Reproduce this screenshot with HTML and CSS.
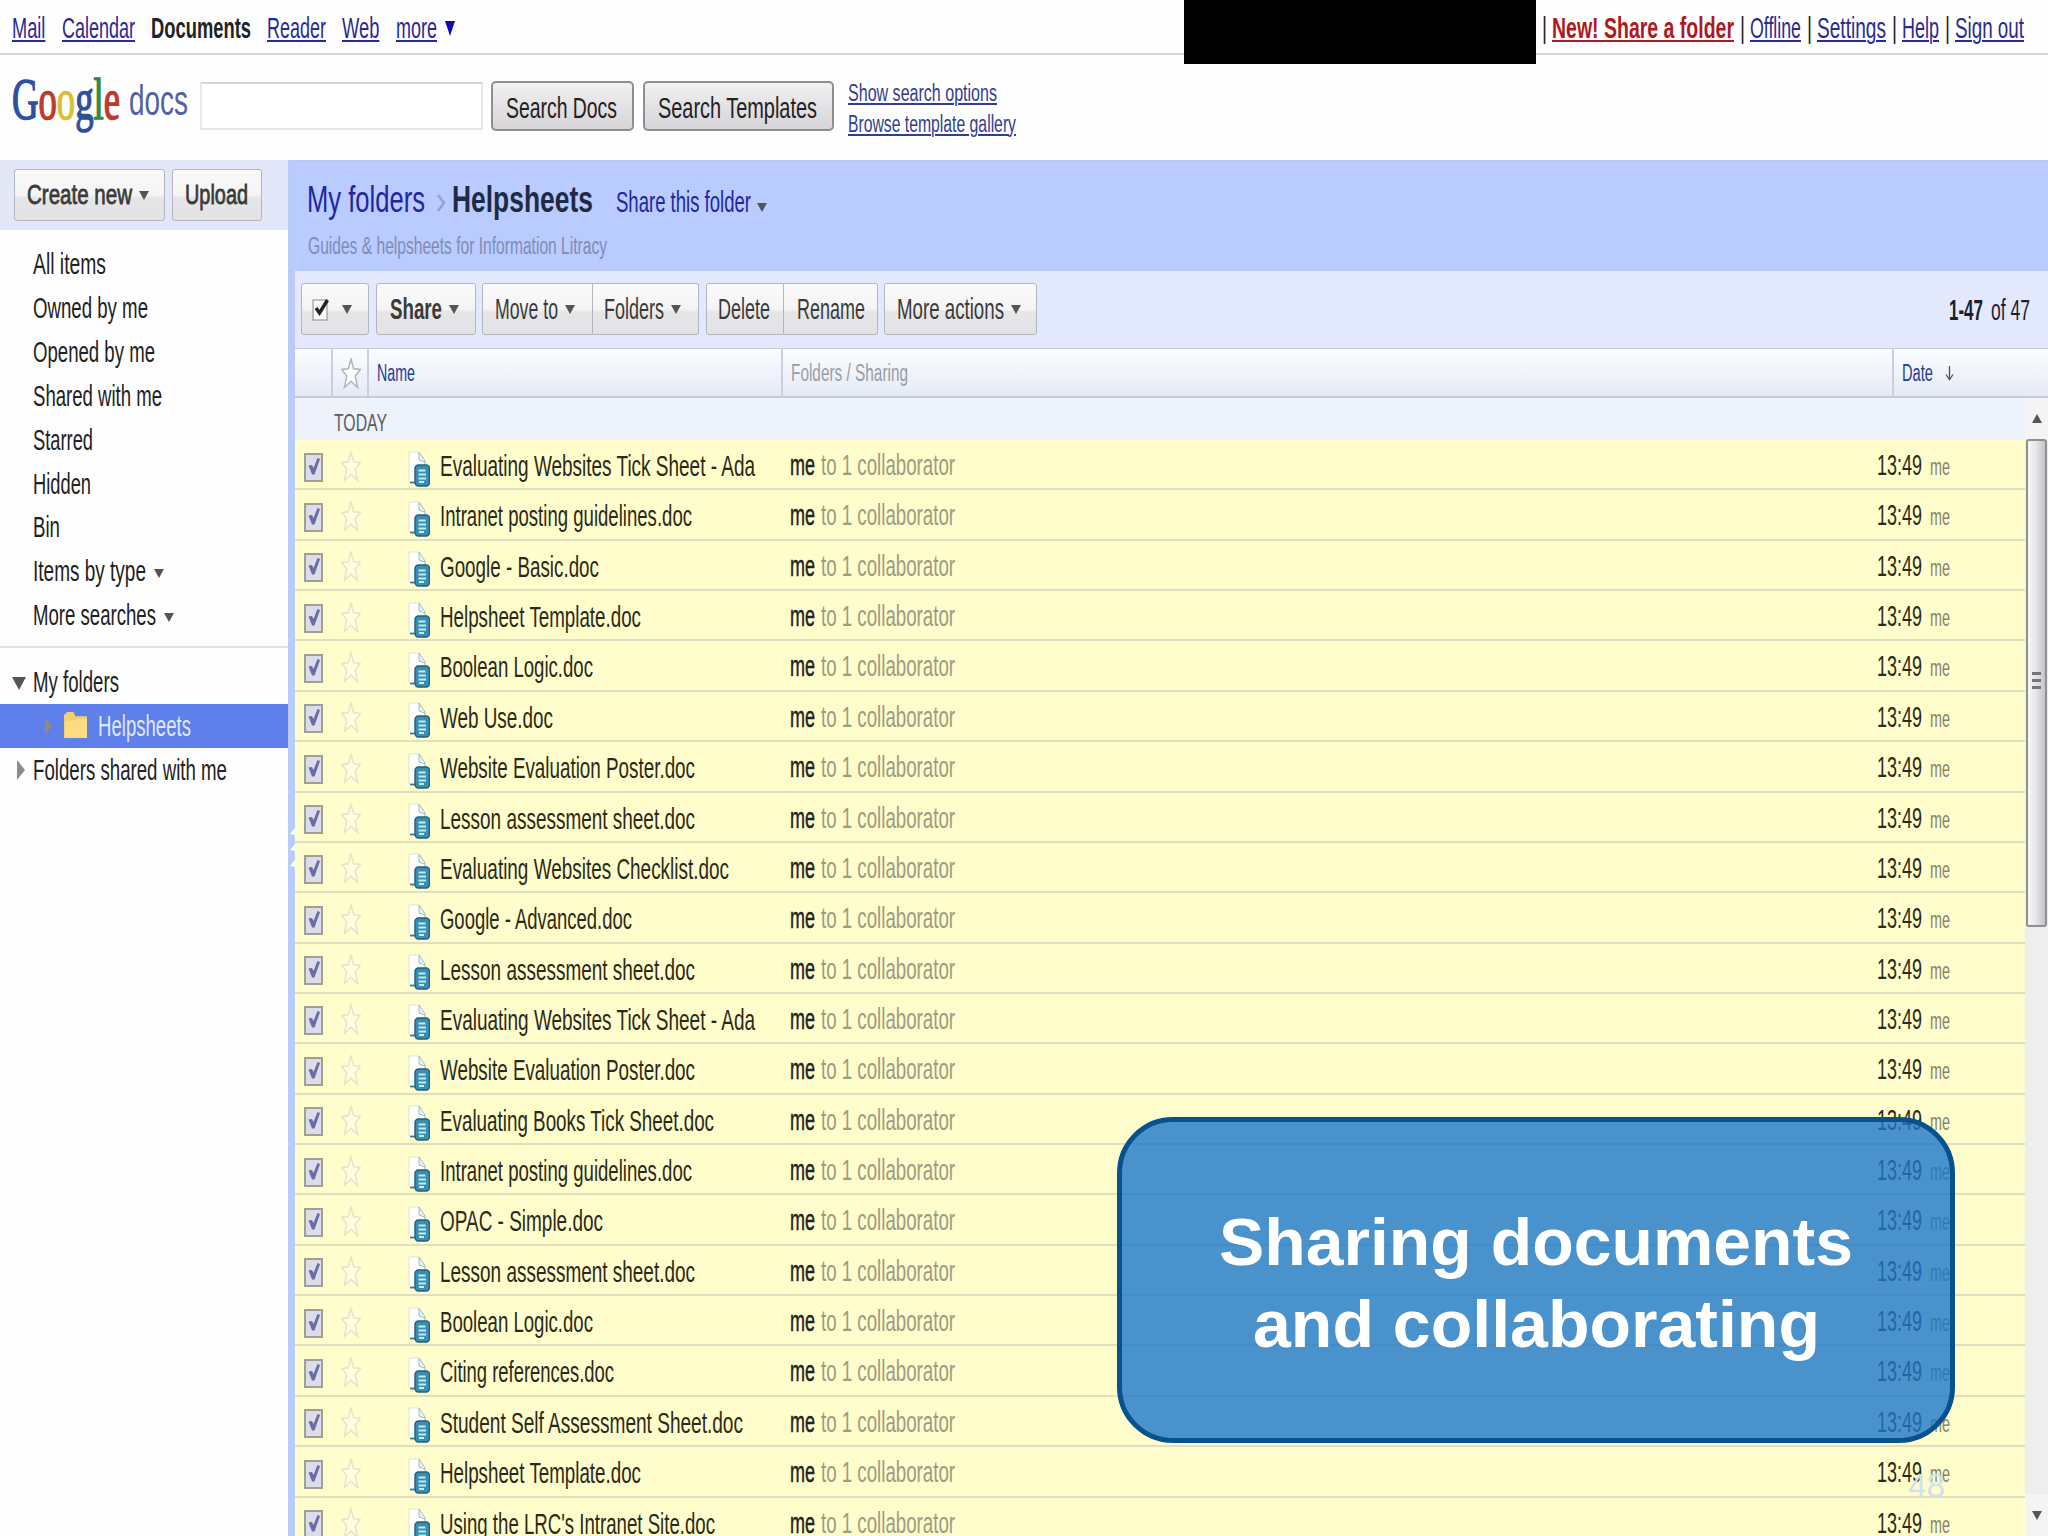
FILE: index.html
```
<!DOCTYPE html>
<html lang="en">

<head>
    <meta charset="UTF-8" />
    <meta name="viewport" content="width=device-width, initial-scale=1.0" />
    <link rel="stylesheet" href="styles.css">
    <title>Google Docs - Helpsheets</title>
</head>

<body>
    <svg class="defs" width="0" height="0">
        <symbol id="star" viewBox="0 0 20 30" preserveAspectRatio="none">
            <path d="M10 1 L12.6 10.5 L19.3 11 L14.2 17.5 L16.6 28.5 L10 22.5 L3.4 28.5 L5.8 17.5 L.7 11 L7.4 10.5 Z" />
        </symbol>
        <symbol id="doc" viewBox="0 0 22 36" preserveAspectRatio="none">
            <path d="M1 1 H11 L17 10 V31 H1 Z" fill="#fff" />
            <path d="M1 31 V1 H11" fill="none" stroke="#dde2d8" />
            <path d="M11 1 L17 10 V14 M11 1 V9 L17 11" fill="#e6f3f4" stroke="#9dbcc2" />
            <path d="M2 31.5 H9" stroke="#43778d" stroke-width="1.8" />
            <rect x="7" y="14" width="14.500" height="21" rx="3.5" fill="#3a8fb0" stroke="#1f617e" stroke-width="1.400" />
            <path d="M10.500 19.5 H17.500 M10.500 23.500 H18 M10.500 27.500 H18 M11 31 H16" stroke="#c4ecf6" stroke-width="2" />
        </symbol>
        <symbol id="check" viewBox="0 0 19 29" preserveAspectRatio="none">
            <rect x="1" y="1" width="17" height="27" fill="#dcdde8" stroke="#a09f96" stroke-width="2" />
            <path d="M4.500 12.500 L8 12 L9.500 15 L13.500 5 L16 6 L10.500 21.500 L8 21.500 Z" fill="#6a6ca6" />
        </symbol>
    </svg>

    <div class="topbar">
        <div class="nav">
            <a class="nav-mail" data-w="34">Mail</a>
            <a class="nav-calendar" data-w="73">Calendar</a>
            <b data-w="100">Documents</b>
            <a data-w="59">Reader</a>
            <a class="nav-web" data-w="38">Web</a>
            <a data-w="41">more</a>
            <i class="tri nav-tri"></i>
        </div>
        <div class="account"></div>
        <div class="links">
            <span data-w="5">|</span>
            <a class="new" data-w="182">New! Share a folder</a>
            <span data-w="5">|</span>
            <a data-w="51">Offline</a>
            <span data-w="5">|</span>
            <a data-w="69">Settings</a>
            <span data-w="5">|</span>
            <a data-w="37">Help</a>
            <span data-w="5">|</span>
            <a data-w="69">Sign out</a>
        </div>
    </div>

    <div class="search">
        <div class="logo">
            <span class="google" data-w="108"><span class="blue">G</span><span class="red">o</span><span class="yellow">o</span><span class="blue">g</span><span class="green">l</span><span class="red">e</span></span>
            <span class="docs" data-w="59">docs</span>
        </div>
        <div class="search-input"></div>
        <div class="search-btn docs-btn"><span data-w="111">Search Docs</span></div>
        <div class="search-btn templates-btn"><span data-w="159">Search Templates</span></div>
        <div class="search-links">
            <div><a data-w="149">Show search options</a></div>
            <div><a data-w="168">Browse template gallery</a></div>
        </div>
    </div>

    <div class="page">
        <div class="sidebar">
            <div class="side-actions">
                <div class="btn create"><span data-w="105">Create new</span><i class="tri"></i></div>
                <div class="btn upload"><span data-w="63">Upload</span></div>
            </div>
            <div class="filters">
                <div class="item"><span data-w="73">All items</span></div>
                <div class="item"><span data-w="115">Owned by me</span></div>
                <div class="item"><span data-w="122">Opened by me</span></div>
                <div class="item"><span data-w="129">Shared with me</span></div>
                <div class="item"><span data-w="60">Starred</span></div>
                <div class="item"><span data-w="58">Hidden</span></div>
                <div class="item"><span data-w="27">Bin</span></div>
                <div class="item"><span data-w="113">Items by type</span><i class="tri"></i></div>
                <div class="item"><span data-w="123">More searches</span><i class="tri"></i></div>
            </div>
            <div class="folders">
                <div class="item"><i class="tri open"></i><span data-w="86">My folders</span></div>
                <div class="item selected">
                    <i class="tri-right"></i>
                    <svg class="folder" viewBox="0 0 22 26" preserveAspectRatio="none">
                        <path d="M0 25 V3 L3 0 H9 L11 4 H22 V25 Z" fill="#f4cf69" />
                        <path d="M1 9 L22 6 V25 H1 Z" fill="#fbdc80" />
                    </svg>
                    <span data-w="93">Helpsheets</span>
                </div>
                <div class="item"><i class="tri-right closed"></i><span data-w="194">Folders shared with me</span></div>
            </div>
        </div>

        <div class="splitter">
            <svg viewBox="0 0 7 44">
                <path d="M7 1 L2 7 L7 8 Z M7 17 L2 23 L7 24 Z M7 33 L2 39 L7 40 Z" fill="#fff" />
            </svg>
        </div>

        <div class="main">
            <div class="crumbs">
                <div class="crumb-row">
                    <a class="big" data-w="118">My folders</a>
                    <svg class="chevron" viewBox="0 0 9 18"><path d="M1 1 L7 9 L1 17" fill="none" stroke="#94a3cd" stroke-width="2.5" /></svg>
                    <b class="big" data-w="141">Helpsheets</b>
                    <a class="share-folder" data-w="135">Share this folder</a>
                    <i class="tri"></i>
                </div>
                <div class="desc"><span data-w="299">Guides &amp; helpsheets for Information Litracy</span></div>
            </div>

            <div class="toolbar">
                <div class="btn select">
                    <svg viewBox="0 0 18 24" preserveAspectRatio="none">
                        <rect x="1" y="3" width="14" height="20" fill="#fafafa" stroke="#888" />
                        <path d="M4 11 L7.500 16 L15.500 3" fill="none" stroke="#222" stroke-width="3.400" />
                    </svg>
                    <i class="tri"></i>
                </div>
                <div class="btn share"><b data-w="52">Share</b><i class="tri"></i></div>
                <div class="btn-group">
                    <div class="btn move"><span data-w="63">Move to</span><i class="tri"></i></div>
                    <div class="btn fold"><span data-w="60">Folders</span><i class="tri"></i></div>
                </div>
                <div class="btn-group">
                    <div class="btn del"><span data-w="52">Delete</span></div>
                    <div class="btn ren"><span data-w="68">Rename</span></div>
                </div>
                <div class="btn more"><span data-w="107">More actions</span><i class="tri"></i></div>
                <div class="count"><b data-w="34">1-47</b><span data-w="39">of 47</span></div>
            </div>

            <div class="cols head">
                <div></div>
                <div class="star-cell"><svg class="star"><use href="#star" /></svg></div>
                <div class="head-name"><span data-w="38">Name</span></div>
                <div class="head-sharing"><span data-w="117">Folders / Sharing</span></div>
                <div class="head-date">
                    <span data-w="31">Date</span>
                    <svg viewBox="0 0 9 15"><path d="M4.500 0 V13 M1 8.500 L4.500 13.500 L8 8.500" fill="none" stroke="#555" stroke-width="1.300" /></svg>
                </div>
            </div>

            <div class="list-wrap">
                <div class="list">
                    <div class="today"><span data-w="53">TODAY</span></div>
                    <div id="rows"></div>
                </div>
                <div class="scrollbar">
                    <div class="arrow-box"><i class="tri up"></i></div>
                    <div class="thumb"><i></i><i></i><i></i></div>
                    <div class="arrow-box bottom"><i class="tri"></i></div>
                </div>
            </div>
        </div>
    </div>

    <div class="callout">
        <div><span data-w="634">Sharing documents</span></div>
        <div><span data-w="567">and collaborating</span></div>
    </div>
    <div class="slide-number"><span data-w="37">48</span></div>

    <script>
        // file name and the width of its label
        const files = [
            ["Evaluating Websites Tick Sheet - Ada", 315],
            ["Intranet posting guidelines.doc", 252],
            ["Google - Basic.doc", 159],
            ["Helpsheet Template.doc", 201],
            ["Boolean Logic.doc", 153],
            ["Web Use.doc", 113],
            ["Website Evaluation Poster.doc", 255],
            ["Lesson assessment sheet.doc", 255],
            ["Evaluating Websites Checklist.doc", 289],
            ["Google - Advanced.doc", 192],
            ["Lesson assessment sheet.doc", 255],
            ["Evaluating Websites Tick Sheet - Ada", 315],
            ["Website Evaluation Poster.doc", 255],
            ["Evaluating Books Tick Sheet.doc", 274],
            ["Intranet posting guidelines.doc", 252],
            ["OPAC - Simple.doc", 163],
            ["Lesson assessment sheet.doc", 255],
            ["Boolean Logic.doc", 153],
            ["Citing references.doc", 174],
            ["Student Self Assessment Sheet.doc", 303],
            ["Helpsheet Template.doc", 201],
            ["Using the LRC's Intranet Site.doc", 275]
        ];

        document.querySelector("#rows").innerHTML = files.map(([name, width]) => `
            <div class="cols row">
                <div class="check-cell"><svg class="check"><use href="#check" /></svg></div>
                <div class="star-cell"><svg class="star"><use href="#star" /></svg></div>
                <div class="name-cell"><svg class="doc"><use href="#doc" /></svg><span data-w="${width}">${name}</span></div>
                <div class="sharing-cell"><span class="me" data-w="25">me</span><span class="grey" data-w="134">to 1 collaborator</span></div>
                <div class="date-cell"><span data-w="45">13:49</span><span class="by" data-w="20">me</span></div>
            </div>`).join("");

        // condense every label to its width
        document.querySelectorAll("[data-w]").forEach((el) => {
            const natural = el.getBoundingClientRect().width;
            const width = Number(el.dataset.w);
            el.style.transform = "scaleX(" + width / natural + ")";
            el.style.marginRight = width - natural + "px";
        });
    </script>
</body>

</html>
```
FILE: styles.css
```
* {
    box-sizing: border-box;
    margin: 0;
    padding: 0;
}

body {
    position: relative;
    width: 2048px;
    height: 1536px;
    overflow: hidden;
    background-color: #fefefe;
    color: #222;
    font-family: "Liberation Sans", Arial, sans-serif;
    font-size: 29px;
}

[data-w] {
    display: inline-block;
    flex: none;
    white-space: nowrap;
    transform-origin: 0 0;
}

.defs {
    position: absolute;
}

svg {
    flex: none;
    display: block;
}

.tri {
    flex: none;
    border: 5px solid transparent;
    border-top: 9px solid #555;
    border-bottom: 0;
}

.tri-right {
    flex: none;
    border: 9px solid transparent;
    border-left: 7px solid #8d8d7a;
    border-right: 0;
}

/* top bar */

.topbar {
    display: flex;
    height: 55px;
    border-bottom: 2px solid #d3d4d9;
}

.nav,
.links {
    display: flex;
    height: 54px;
    line-height: 56px;
}

.nav {
    width: 1184px;
    padding-left: 12px;
    gap: 16px;
}

.nav a,
.links a,
.search-links a {
    color: #2a2a94;
    text-decoration: underline;
    text-decoration-thickness: 2px;
    text-underline-offset: 2px;
}

.nav-mail,
.nav-web {
    padding-right: 1px;
}

.nav-tri {
    margin: 21px 0 0 -8px;
    border-top: 15px solid #0d0db0;
}

.account {
    width: 352px;
    height: 64px;
    background-color: #000;
}

.links {
    gap: 5.5px;
    padding-left: 5.5px;
}

.links .new {
    color: #b01820;
    font-weight: bold;
}

/* search */

.search {
    display: flex;
    height: 105px;
}

.logo {
    display: flex;
    width: 200px;
    padding-left: 12px;
    gap: 9px;
}

.google {
    font-family: "Liberation Serif", serif;
    font-size: 59px;
    line-height: 88px;
    -webkit-text-stroke: 1.500px;
}

.blue {
    color: #2f4f9f;
}

.red {
    color: #bd3a2b;
}

.yellow {
    color: #d9c22e;
}

.green {
    color: #2e8a3c;
}

.docs {
    color: #5260a4;
    font-size: 43px;
    line-height: 91px;
}

.search-input {
    width: 283px;
    height: 48px;
    margin-top: 27px;
    border: 2px solid #e8e8ea;
    border-top-color: #d6d6d8;
    background-color: #fff;
}

.search-btn {
    height: 50px;
    margin: 26px 0 0 8px;
    border: 2px solid #8f8f92;
    border-radius: 5px;
    background: linear-gradient(#f1f0f2, #d6d4d8);
    line-height: 51px;
    padding-left: 13px;
}

.docs-btn {
    width: 143px;
}

.templates-btn {
    width: 191px;
    margin-left: 9px;
}

.search-links {
    margin: 23px 0 0 14px;
    font-size: 23px;
    line-height: 30.500px;
}

.search-links a {
    color: #30408f;
    text-underline-offset: 2px;
}

/* sidebar */

.page {
    display: flex;
    height: 1376px;
}

.sidebar {
    width: 288px;
}

.side-actions {
    display: flex;
    gap: 7px;
    height: 70px;
    padding: 9px 0 0 14px;
    background-color: #e3e8f8;
}

.btn {
    display: flex;
    align-items: center;
    height: 52px;
    border: 1.500px solid #b3b5c0;
    border-radius: 3px;
    background: linear-gradient(#fafafb 0, #f4f4f5 50%, #e6e6e8 56%, #e3e3e5 100%);
    color: #3a3a3a;
    line-height: 52px;
}

.btn .tri {
    margin-left: 7px;
}

.create,
.upload {
    padding-left: 12px;
    font-size: 28px;
    -webkit-text-stroke: .8px #3a3a3a;
}

.create {
    width: 151px;
}

.upload {
    width: 90px;
}

.filters {
    height: 418px;
    padding-top: 13px;
    border-bottom: 2px solid #dde1ec;
}

.item {
    display: flex;
    align-items: center;
    height: 43.850px;
    padding-left: 33px;
    line-height: 43px;
}

.filters .tri {
    margin: 4px 0 0 8px;
}

.folders {
    padding-top: 12px;
}

.folders span {
    padding-top: 1px;
}

.folders .open {
    margin: 3px 7px 0 -21px;
    border-width: 13px 7px 0;
}

.folders .closed {
    margin: 0 8px 0 -16px;
    border-width: 10px 0 10px 8px;
    border-left-color: #8b8b8b;
}

.selected {
    background-color: #5f80ea;
    color: #dfe8ff;
    padding-left: 45px;
}

.folder {
    width: 23px;
    height: 27px;
    margin: 0 11px 0 12px;
}

.splitter {
    display: flex;
    align-items: flex-start;
    width: 7px;
    padding-top: 667px;
    background-color: #b9cbf8;
}

.splitter svg {
    width: 7px;
    height: 44px;
}

/* main */

.main {
    width: 1753px;
}

.crumbs {
    height: 111px;
    padding-left: 12px;
    background-color: #b9cbff;
    border-top: 2px solid #b9c5ec;
}

.crumb-row {
    display: flex;
    align-items: baseline;
    height: 69px;
    padding-top: 17px;
    color: #1f2a44;
}

.crumb-row a {
    color: #2027a0;
}

.crumb-row .tri {
    margin: 0 0 5px 6px;
}

.big {
    font-size: 37px;
}

.chevron {
    width: 9px;
    height: 18px;
    margin: 0 6px 7px 12px;
}

.share-folder {
    margin-left: 23px;
}

.desc {
    padding-left: 1px;
    color: #808bb4;
    font-size: 23px;
    line-height: 30px;
}

.toolbar {
    display: flex;
    align-items: flex-start;
    height: 77px;
    padding: 12px 18px 0 6px;
    gap: 6.500px;
    background-color: #e3e9fd;
}

.select {
    width: 68px;
    padding-left: 10px;
}

.select svg {
    width: 18px;
    height: 24px;
}

.select .tri {
    margin-left: 12px;
}

.share {
    width: 100px;
    padding-left: 13px;
}

.btn-group {
    display: flex;
}

.btn-group .btn:first-child {
    border-radius: 3px 0 0 3px;
}

.btn-group .btn:last-child {
    border-left: 0;
    border-radius: 0 3px 3px 0;
}

.move {
    width: 111px;
    padding-left: 12px;
}

.fold {
    width: 106px;
    padding-left: 11px;
}

.del {
    width: 78px;
    padding-left: 11px;
}

.ren {
    width: 94px;
    padding-left: 13px;
}

.more {
    width: 153px;
    padding-left: 12px;
}

.count {
    display: flex;
    gap: 8px;
    margin-left: auto;
    color: #1d1d2c;
    line-height: 54px;
}

.cols {
    display: grid;
    grid-template-columns: 36px 36px 414px 1111px 1fr;
}

.head {
    height: 50px;
    border-top: 1px solid #c3cbe0;
    border-bottom: 2px solid #c6cbdc;
    background: linear-gradient(#fbfeff, #e4e9f6);
    font-size: 23px;
    line-height: 49px;
}

.head > div + div {
    border-left: 2px solid #c9cfdf;
}

.star-cell {
    display: flex;
    align-items: center;
    padding-left: 8px;
}

.star {
    width: 20px;
    height: 31px;
    fill: #fdfdfd;
    stroke: #b0b3bb;
    stroke-width: 1.500px;
}

.head-name {
    padding-left: 8px;
    color: #273c94;
}

.head-sharing {
    padding-left: 8px;
    color: #989da5;
}

.head-date {
    display: flex;
    align-items: center;
    padding-left: 8px;
    color: #273c94;
}

.head-date svg {
    width: 9px;
    height: 15px;
    margin-left: 12px;
}

.list-wrap {
    display: flex;
    height: 1138px;
    overflow: hidden;
}

.list {
    width: 1730px;
}

.today {
    height: 42px;
    padding-left: 39px;
    background-color: #eef2fb;
    color: #5b5d63;
    font-size: 23px;
    line-height: 51px;
}

.row {
    height: 50.370px;
    border-bottom: 2px solid #e0dfc0;
    background-color: #fffdcb;
    font-size: 30px;
    line-height: 50px;
}

.check-cell {
    display: flex;
    align-items: center;
    padding-left: 9px;
}

.check {
    width: 19px;
    height: 29px;
    margin-top: 2px;
}

.row .star-cell {
    padding-left: 10px;
}

.row .star {
    fill: #fffee0;
    stroke: #e2e4cb;
}

.name-cell {
    display: flex;
    align-items: center;
    padding-left: 41px;
    color: #2b2a18;
}

.doc {
    width: 22px;
    height: 36px;
    margin: 5px 10px 0 0;
}

.sharing-cell {
    display: flex;
    gap: 6px;
    padding-left: 9px;
}

.me {
    -webkit-text-stroke: .5px #222;
}

.grey {
    color: #9c9c83;
}

.date-cell {
    display: flex;
    align-items: baseline;
    gap: 8px;
    margin-left: -15px;
    color: #2b2a18;
}

.by {
    color: #85846c;
    font-size: 24px;
}

.scrollbar {
    display: flex;
    flex-direction: column;
    width: 23px;
    background-color: #eeeeef;
}

.arrow-box {
    display: flex;
    align-items: center;
    justify-content: center;
    height: 41px;
    background-color: #f4f4f5;
}

.up {
    border-top: 0;
    border-bottom: 9px solid #555;
}

.thumb {
    display: flex;
    flex-direction: column;
    align-items: center;
    justify-content: center;
    gap: 4px;
    height: 488px;
    width: 21px;
    margin-left: 1px;
    padding-bottom: 5px;
    border: 2px solid #909093;
    border-radius: 3px;
    background: linear-gradient(to right, #f7f7f8, #e6e6e8 45%, #c5c5c9);
}

.thumb i {
    width: 9px;
    height: 3px;
    background-color: #77777a;
}

.bottom {
    margin-top: auto;
}

/* overlay */

.callout {
    position: absolute;
    left: 1117px;
    top: 1117px;
    width: 838px;
    height: 326px;
    padding-top: 79px;
    border: 5px solid #07518f;
    border-radius: 56px;
    background-color: rgba(29, 119, 203, .8);
    color: #fff;
    font-size: 67px;
    font-weight: bold;
    line-height: 82px;
    text-align: center;
}

.slide-number {
    position: absolute;
    left: 1908px;
    top: 1467px;
    color: #cfe3ea;
    font-size: 33px;
    line-height: 38px;
}
```
